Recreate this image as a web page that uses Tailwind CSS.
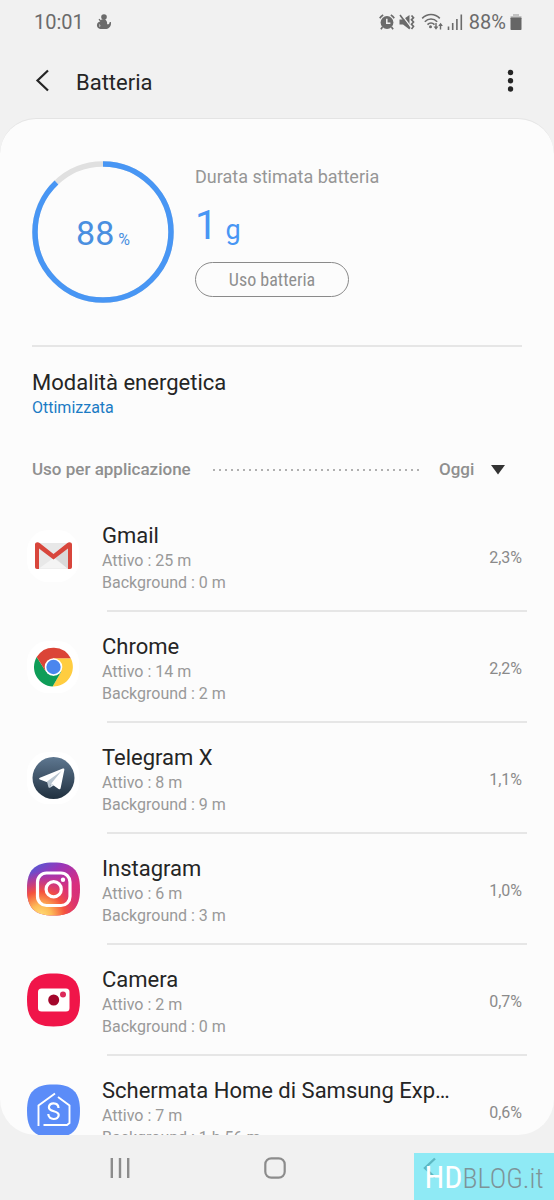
<!DOCTYPE html>
<html lang="it">
  <head>
    <meta charset="UTF-8" />
    <meta name="viewport" content="width=device-width, initial-scale=1.0" />
    <title>Batteria</title>
    <script src="https://cdn.jsdelivr.net/npm/@tailwindcss/browser@4"></script>
  </head>
  <body class="relative flex h-screen flex-col overflow-hidden bg-[#f1f1f1] font-['Roboto',sans-serif] text-[#252525]">
    <!-- status bar -->
    <div class="flex h-11 shrink-0 items-center justify-between pr-8 pl-[34px] text-xl text-[#6b6b6b]">
      <div class="flex items-center gap-3">
        <span>10:01</span>
        <svg class="h-4 w-4" viewBox="0 0 16 16" fill="currentColor">
          <circle cx="8" cy="3" r="2.8" />
          <path d="M5.500 5.500 8.500 5c2 1.200 3 3.200 2.600 5.200 1.600.4 2.400-.4 2.600-2.200h1.200c.6 4-1.500 6.500-4.500 7H4.500C1.500 14.500.3 12 1.300 9.500 2 8 3.500 7.500 4.300 7.800L2.500 5.600l1-.8 1.300 1.400z" />
          <path d="M3 10.500c1 .2 1.200 1.600.5 2.300" fill="none" stroke="#f1f1f1" stroke-width=".8" />
        </svg>
      </div>
      <div class="flex items-center gap-1">
        <svg class="h-4 w-4" viewBox="0 0 16 16" fill="none" stroke="currentColor">
          <circle cx="8" cy="8.500" r="6.400" fill="currentColor" stroke="none" />
          <path d="M.8 4.200A9 9 0 0 1 4.200.9M11.800.9a9 9 0 0 1 3.400 3.300M3.500 13l-1.600 2.200M12.500 13l1.600 2.200" stroke-width="1.700" />
          <path d="M7.800 4.800v4.400h3.600" stroke="#f1f1f1" stroke-width="1.500" />
        </svg>
        <svg class="mr-0.5 h-4 w-4" viewBox="0 0 16 16" fill="none" stroke="currentColor">
          <path d="M.5 5.500h3.500l6.500-4.500v14.500L4 10.500H.5z" fill="currentColor" stroke="none" />
          <path d="M2.500.5 11.500 12.500" stroke="#f1f1f1" stroke-width="1.300" />
          <path d="M1 1 11 14.500" stroke-width="1.600" />
          <path d="m12.500 1.500 2 2.200-2 2.100 2 2.200-2 2.200 2 2.200-2 2.600" stroke-width="1.700" />
        </svg>
        <svg class="h-[18px] w-[22px]" viewBox="0 0 22 18" fill="none" stroke="currentColor" stroke-width="1.600">
          <path d="M1.200 5.400c5-5.200 12.600-5.200 17.600 0M3.800 8.700c3.500-3.600 8.900-3.600 12.400 0M6.500 11.600c2-2 5-2 7 0" />
          <circle cx="9.500" cy="13.700" r="1.500" fill="currentColor" stroke="none" />
          <path d="M15 10v5M19.500 16.500v-5" stroke-width="1.400" />
          <path d="M12.600 13.500h4.800L15 16.700zM17.300 13h4.600l-2.300-3.200z" fill="currentColor" stroke="none" />
        </svg>
        <svg class="mr-0.5 h-4 w-4" viewBox="0 0 16 16" fill="none" stroke="currentColor" stroke-width="1.600">
          <path d="M1.500 12.500V16M5.700 9v7M9.900 5v11M14.300.5V16" />
        </svg>
        <span>88%</span>
        <svg class="h-4 w-3" viewBox="0 0 12 16">
          <path d="M3 0h6v2h2.500v3H.5V2H3z" fill="#c3c3c3" />
          <rect x=".5" y="3.500" width="11" height="12.500" rx=".8" fill="#666" />
        </svg>
      </div>
    </div>

    <!-- header -->
    <header class="flex h-[74px] shrink-0 items-center pr-8 pl-8">
      <button type="button" aria-label="Indietro" class="w-11">
        <svg class="h-6 w-5" viewBox="0 0 20 24" fill="none" stroke="#252525" stroke-width="2.200">
          <path d="M16 1.500 5.500 11.500 16 21.500" />
        </svg>
      </button>
      <h1 class="flex-1 pt-0.5 text-[22px]">Batteria</h1>
      <button type="button" aria-label="Altre opzioni">
        <svg class="h-6 w-6" viewBox="0 0 24 24" fill="#252525">
          <circle cx="12.500" cy="3.500" r="2.700" />
          <circle cx="12.500" cy="11.700" r="2.700" />
          <circle cx="12.500" cy="20" r="2.700" />
        </svg>
      </button>
    </header>

    <main class="min-h-0 flex-1 overflow-hidden rounded-[36px] border-t border-[#e4e4e4] bg-[#fcfcfc]">
      <!-- charge summary -->
      <section class="mx-8 flex gap-[21px] border-b-2 border-[#e6e6e6] pt-[42px] pb-[42px]">
        <div class="relative h-[142px] w-[142px] shrink-0">
          <svg class="h-full w-full -rotate-90" viewBox="0 0 142 142" fill="none" stroke-width="5.500">
            <circle cx="71" cy="71" r="68" stroke="#e0e0e0" />
            <circle cx="71" cy="71" r="68" stroke="#4896f4" pathLength="100" stroke-dasharray="88 100" />
          </svg>
          <div class="absolute inset-0 flex items-center justify-center pt-0.5 text-[#4a8fe0]">
            <p class="flex items-baseline gap-1"><span class="text-[34px]">88</span><span class="text-base">%</span></p>
          </div>
        </div>
        <div class="flex flex-col items-start">
          <p class="mt-1 text-lg leading-6 text-[#969696]">Durata stimata batteria</p>
          <p class="mt-[13px] flex items-baseline gap-2 leading-12 text-[#4896f4]">
            <span class="text-[40px]">1</span><span class="text-[27px]">g</span>
          </p>
          <button type="button" class="mt-2 h-[35px] w-[154px] rounded-full border border-[#8a8a8a] font-['Roboto_Condensed','Roboto',sans-serif] text-lg text-[#8f8f8f]">Uso batteria</button>
        </div>
      </section>

      <section class="mx-8 pt-[21px]">
        <h2 class="text-[22px] leading-[30px]">Modalità energetica</h2>
        <a href="#" class="block text-base leading-5 text-[#1b7bc4]">Ottimizzata</a>
      </section>

      <div class="mx-8 mt-10 flex h-6 items-center text-[17px] font-medium text-[#8f8f8f]">
        <label for="periodo">Uso per applicazione</label>
        <div class="mr-5 ml-5 h-1 flex-1 bg-[radial-gradient(circle,#b0b0b0_1px,transparent_1px)] bg-[length:6px_4px]"></div>
        <div class="relative">
          <select id="periodo" class="w-[83px] appearance-none bg-transparent">
            <option>Oggi</option>
          </select>
          <svg class="pointer-events-none absolute top-2 right-4 h-[10px] w-4" viewBox="0 0 16 10" fill="#333">
            <path d="M1 0h14L8 9.500z" />
          </svg>
        </div>
      </div>

      <!-- app list -->
      <ul class="mt-[19px]">
        <li>
          <div class="flex h-[109px] items-center gap-[22px] pr-8 pl-[26px]">
            <svg class="h-[54px] w-[54px] shrink-0" viewBox="0 0 54 54">
              <rect x="1" y="1" width="52" height="52" rx="21" fill="#fff" />
              <path d="M10 14h35v26H10z" fill="#e8e8e8" />
              <path d="M13 39.500 27.500 29 42 39.500z" fill="#f4f4f4" />
              <path d="M13 20 27.500 30 42 20v20L28 28z" fill="#d9d9d9" />
              <path d="M9 15.500c0-2.300 3-3 4.600-1.500l13.900 11L41.400 14c1.600-1.500 4.600-.8 4.600 1.500V38c0 1.200-.8 2-2 2h-2V19.500l-14.500 11L13 19.500V40h-2c-1.200 0-2-.8-2-2z" fill="#d8463c" />
            </svg>
            <div class="min-w-0 flex-1 pt-1">
              <h3 class="text-[22px] leading-7">Gmail</h3>
              <p class="text-base leading-[22px] text-[#999]">Attivo : 25 m</p>
              <p class="text-base leading-[22px] text-[#999]">Background : 0 m</p>
            </div>
            <span class="pt-1 text-base text-[#8a8a8a]">2,3%</span>
          </div>
          <hr class="mr-[27px] ml-[107px] border-t-2 border-[#e6e6e6]" />
        </li>
        <li>
          <div class="flex h-[109px] items-center gap-[22px] pr-8 pl-[26px]">
            <svg class="h-[54px] w-[54px] shrink-0" viewBox="0 0 54 54">
              <rect x="1" y="1" width="52" height="52" rx="21" fill="#fff" />
              <path d="M27.500 18.300h17.300a19.500 19.500 0 0 1-18.200 28.200l8.400-14.600z" fill="#ffcd40" />
              <path d="M10.700 17.100a19.500 19.500 0 0 0 15.900 29.400l8.700-15-7.800 4.200-7.800-4.500z" fill="#0f9d58" />
              <path d="M10.700 17.100a19.500 19.500 0 0 1 34.100 1.200H27.500l-8 12.600z" fill="#db4437" />
              <circle cx="27.500" cy="27" r="8.800" fill="#fff" />
              <circle cx="27.500" cy="27" r="7.200" fill="#4a86ee" />
            </svg>
            <div class="min-w-0 flex-1 pt-1">
              <h3 class="text-[22px] leading-7">Chrome</h3>
              <p class="text-base leading-[22px] text-[#999]">Attivo : 14 m</p>
              <p class="text-base leading-[22px] text-[#999]">Background : 2 m</p>
            </div>
            <span class="pt-1 text-base text-[#8a8a8a]">2,2%</span>
          </div>
          <hr class="mr-[27px] ml-[107px] border-t-2 border-[#e6e6e6]" />
        </li>
        <li>
          <div class="flex h-[109px] items-center gap-[22px] pr-8 pl-[26px]">
            <svg class="h-[54px] w-[54px] shrink-0" viewBox="0 0 54 54">
              <defs>
                <linearGradient id="tg" x1="0" y1="0" x2="0" y2="1">
                  <stop offset="0" stop-color="#5e7790" />
                  <stop offset="1" stop-color="#20303f" />
                </linearGradient>
              </defs>
              <rect x="1" y="1" width="52" height="52" rx="21" fill="#fff" />
              <circle cx="27.500" cy="27" r="21" fill="url(#tg)" />
              <path d="M13.800 28.400c-1-.5-.9-1.100.1-1.600L36.800 17.600c1.100-.4 1.700.1 1.500 1.300l-3.700 18.300c-.2 1.200-1 1.500-2 .8l-7.400-5.200-8.600-3.400z" fill="#fff" />
              <path d="M21 30.500 35.500 20 25.500 32.200 23.500 37c-.8 0-1-.6-1.200-1.200z" fill="#b9c6d1" />
              <path d="m25.500 32.400 2.500 1.900-4.500 2.700z" fill="#dbe3ea" />
            </svg>
            <div class="min-w-0 flex-1 pt-1">
              <h3 class="text-[22px] leading-7">Telegram X</h3>
              <p class="text-base leading-[22px] text-[#999]">Attivo : 8 m</p>
              <p class="text-base leading-[22px] text-[#999]">Background : 9 m</p>
            </div>
            <span class="pt-1 text-base text-[#8a8a8a]">1,1%</span>
          </div>
          <hr class="mr-[27px] ml-[107px] border-t-2 border-[#e6e6e6]" />
        </li>
        <li>
          <div class="flex h-[109px] items-center gap-[22px] pr-8 pl-[26px]">
            <svg class="h-[54px] w-[54px] shrink-0" viewBox="0 0 54 54">
              <defs>
                <linearGradient id="igBase" x1=".1" y1="0" x2=".8" y2="1">
                  <stop offset="0" stop-color="#4a5fd8" />
                  <stop offset=".3" stop-color="#9a35b8" />
                  <stop offset=".65" stop-color="#d92e7f" />
                  <stop offset="1" stop-color="#d6306f" />
                </linearGradient>
                <radialGradient id="igGlow" cx=".25" cy="1.020" r=".85">
                  <stop offset="0" stop-color="#ffe07a" />
                  <stop offset=".25" stop-color="#fdbb57" />
                  <stop offset=".55" stop-color="#f5533d" />
                  <stop offset="1" stop-color="#d92e7f" stop-opacity="0" />
                </radialGradient>
              </defs>
              <path d="M27.500 .5C46.500 .5 54 8 54 27S46.500 53.500 27.500 53.500 1 46 1 27 8.500 .5 27.500 .5z" fill="url(#igBase)" />
              <path d="M27.500 .5C46.500 .5 54 8 54 27S46.500 53.500 27.500 53.500 1 46 1 27 8.500 .5 27.500 .5z" fill="url(#igGlow)" />
              <g fill="none" stroke="#fff" stroke-width="3.200">
                <rect x="11.500" y="11" width="32.500" height="32.500" rx="9" />
                <circle cx="27.700" cy="27.200" r="7.600" />
              </g>
              <circle cx="37" cy="17.800" r="2.200" fill="#fff" />
            </svg>
            <div class="min-w-0 flex-1 pt-1">
              <h3 class="text-[22px] leading-7">Instagram</h3>
              <p class="text-base leading-[22px] text-[#999]">Attivo : 6 m</p>
              <p class="text-base leading-[22px] text-[#999]">Background : 3 m</p>
            </div>
            <span class="pt-1 text-base text-[#8a8a8a]">1,0%</span>
          </div>
          <hr class="mr-[27px] ml-[107px] border-t-2 border-[#e6e6e6]" />
        </li>
        <li>
          <div class="flex h-[109px] items-center gap-[22px] pr-8 pl-[26px]">
            <svg class="h-[54px] w-[54px] shrink-0" viewBox="0 0 54 54">
              <path d="M27.500 .5C46.500 .5 54 8 54 27S46.500 53.500 27.500 53.500 1 46 1 27 8.500 .5 27.500 .5z" fill="#f01549" />
              <rect x="12" y="15.500" width="31.500" height="23" rx="3.500" fill="#fff" />
              <circle cx="27.700" cy="27" r="5.500" fill="#a3062c" />
              <circle cx="37" cy="21.500" r="3" fill="#dc2a5a" />
            </svg>
            <div class="min-w-0 flex-1 pt-1">
              <h3 class="text-[22px] leading-7">Camera</h3>
              <p class="text-base leading-[22px] text-[#999]">Attivo : 2 m</p>
              <p class="text-base leading-[22px] text-[#999]">Background : 0 m</p>
            </div>
            <span class="pt-1 text-base text-[#8a8a8a]">0,7%</span>
          </div>
          <hr class="mr-[27px] ml-[107px] border-t-2 border-[#e6e6e6]" />
        </li>
        <li>
          <div class="flex h-[109px] items-center gap-[22px] pr-8 pl-[26px]">
            <svg class="h-[54px] w-[54px] shrink-0" viewBox="0 0 54 54">
              <path d="M27.500 .5C46.500 .5 54 8 54 27S46.500 53.500 27.500 53.500 1 46 1 27 8.500 .5 27.500 .5z" fill="#5b8cf8" />
              <g fill="none" stroke="#fff" stroke-width="1.900">
                <path d="M12.500 42V21.500L29 9.500M32 13 43.500 21.500V39L41 41H17.500" />
                <path d="M32.500 24c-.2-6.200-9.600-6-9.600-.8 0 5.300 9.800 2.700 9.800 7.900 0 5.400-10.400 5.300-10.400-1" stroke-width="2.200" />
              </g>
            </svg>
            <div class="min-w-0 flex-1 pt-1">
              <h3 class="mr-4 truncate text-[22px] leading-7">Schermata Home di Samsung Experience</h3>
              <p class="text-base leading-[22px] text-[#999]">Attivo : 7 m</p>
              <p class="text-base leading-[22px] text-[#999]">Background : 1 h 56 m</p>
            </div>
            <span class="pt-1 text-base text-[#8a8a8a]">0,6%</span>
          </div>
        </li>
      </ul>
    </main>

    <!-- navigation bar -->
    <nav class="flex h-[65px] shrink-0 items-center pr-[47px] pl-[42px] text-[#8c8c8c]">
      <button type="button" aria-label="Recenti" class="flex flex-1 justify-center">
        <svg class="h-6 w-6" viewBox="0 0 24 24" stroke="currentColor" stroke-width="2.400">
          <path d="M3.800 2v20M12 2v20M20.200 2v20" />
        </svg>
      </button>
      <button type="button" aria-label="Home" class="flex flex-1 justify-center">
        <svg class="h-6 w-6" viewBox="0 0 24 24" fill="none" stroke="currentColor" stroke-width="2.200">
          <rect x="2.300" y="2.300" width="19.400" height="19.400" rx="6" />
        </svg>
      </button>
      <button type="button" aria-label="Indietro" class="flex flex-1 justify-center">
        <svg class="h-6 w-6" viewBox="0 0 24 24" fill="none" stroke="currentColor" stroke-width="2.400">
          <path d="M17 2.500 7 12l10 9.500" />
        </svg>
      </button>
    </nav>

    <!-- site badge -->
    <div class="absolute right-0 bottom-0 flex h-[47px] w-[140px] items-baseline justify-center bg-[#2de3f9]/50 font-['Roboto_Condensed','Roboto',sans-serif] leading-12 font-light whitespace-nowrap">
      <span class="text-[32px] font-normal text-white">HD</span><span class="text-[28px] text-[#7d9499]">BLOG.it</span>
    </div>
  </body>
</html>
